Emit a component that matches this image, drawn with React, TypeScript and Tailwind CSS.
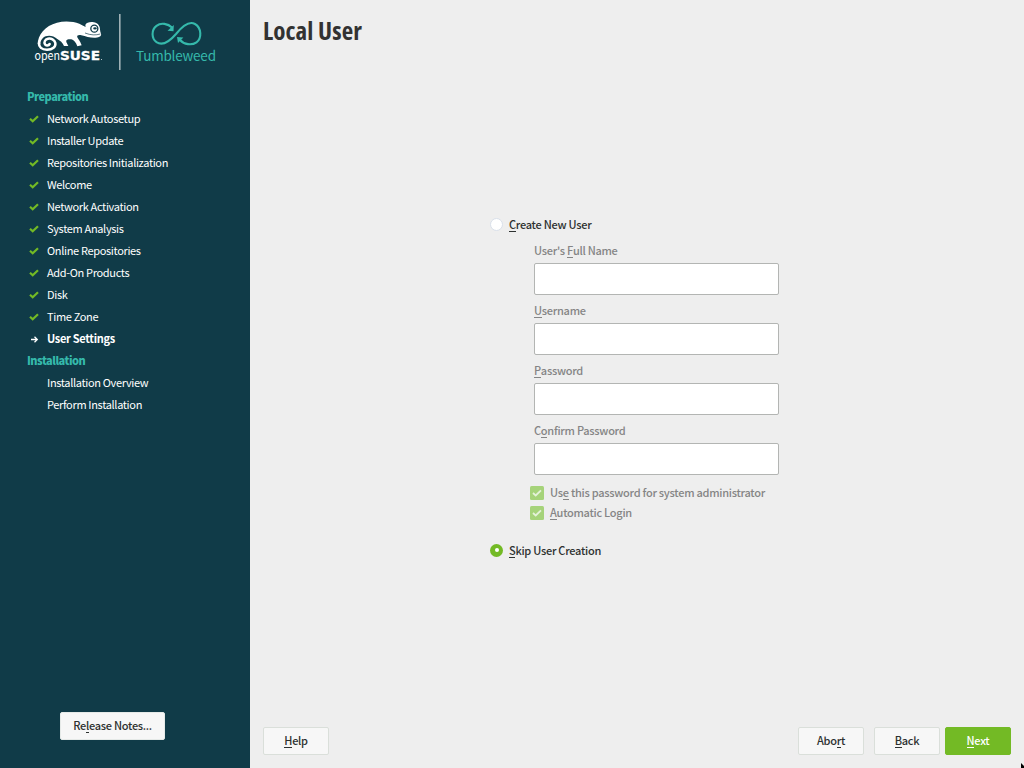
import React from "react";

const FONT = "font-['Noto_Sans_CJK_SC','Noto_Sans',sans-serif]";

/** Label with an underlined keyboard mnemonic, marked by "&" before the letter. */
function Label({ text }: { text: string }) {
  const i = text.indexOf("&");
  if (i < 0) return <>{text}</>;
  return (
    <>
      {text.slice(0, i)}
      <span className="inline-block h-4 border-b border-current align-top leading-4">{text[i + 1]}</span>
      {text.slice(i + 2)}
    </>
  );
}

function Logo() {
  return (
    <svg width="250" height="80" viewBox="0 0 250 80" className="block shrink-0">
      <g transform="translate(25 5) scale(.33333)">
        <path
          fill="#fff"
          d="M38 118C38 90 60 62 96 53C118 47 145 49 163 56C170 59 176 63 182 66C180 60 181 55 188 53C199 49 218 51 223 64C226 70 224 77 228 86C230 92 224 97 212 98C198 99 183 95 169 91C160 89 155 92 157 97C160 103 165 107 170 121L157 124C153 112 146 105 139 103C128 101 121 104 125 113L130 123H117C113 113 105 107 98 103C86 92 72 90 62 94C52 98 46 108 46 118Z"
        />
        <path
          d="M42 114C41 126 50 134 66 134C83 134 93 125 91 114C89 104 78 99 69 101C60 103 56 112 60 118C63 123 71 122 74 117"
          fill="none"
          stroke="#fff"
          strokeWidth="7.5"
          strokeLinecap="round"
        />
        <circle cx="208" cy="71" r="10.5" fill="#fff" stroke="#103b48" strokeWidth="4" />
        <ellipse cx="210" cy="70" rx="5.5" ry="3.6" fill="#103b48" />
        <path d="M180 84C197 91 213 91 226 87" fill="none" stroke="#103b48" strokeWidth="2" />
      </g>
      <g fill="#fff">
        <text x="34.5" y="60.4" fontSize="12" fontFamily="'Noto Sans CJK SC', sans-serif" fontWeight="400" textLength="25.5" lengthAdjust="spacingAndGlyphs">open</text>
        <text x="60" y="60.4" fontSize="13" fontFamily="'DejaVu Sans', sans-serif" fontWeight="700" stroke="#fff" strokeWidth=".3" textLength="40" lengthAdjust="spacingAndGlyphs">SUSE</text>
      </g>
      <rect x="101" y="59" width="1" height="1" fill="#b7c4c8" />
      <rect x="119" y="14" width="1.6" height="56" fill="#9fb1b6" />
      <path
        fill="none"
        stroke="#35b9ab"
        strokeWidth="2.1"
        d="M172 27.6C168 23.6 161 22.3 156.5 25.8C151 30 151.5 38.5 156.5 42.2C163 46.5 170 41 176 34C182 26.5 188.5 20.3 195 24C201.8 28 201.8 38.5 196.5 42.3C191.5 45.8 184 44.5 180 40"
      />
      <path fill="#35b9ab" d="M173.8 25L173.5 31.3L167.5 30.7ZM177 37L183.4 37.5L178 43Z" />
      <text x="136" y="61.4" fill="#35b9ab" fontSize="13.5" fontWeight="400" fontFamily="'Noto Sans CJK SC', sans-serif" textLength="80">Tumbleweed</text>
    </svg>
  );
}

function Step({ label, state }: { label: string; state?: "done" | "current" }) {
  return (
    <li className="flex h-[22px] items-center text-white">
      <span className="flex w-[20px] shrink-0 pl-[2px]">
        {state === "done" && (
          <svg width="10" height="8" viewBox="0 0 10 8">
            <path d="M1 3.8L3.7 6.3L9 1.3" fill="none" stroke="#73ba25" strokeWidth="2.2" />
          </svg>
        )}
        {state === "current" && (
          <svg width="10" height="8" viewBox="0 0 10 8">
            <path d="M2 4.5H8.2M5.5 1.7L8.3 4.5L5.5 7.3" fill="none" stroke="#fff" strokeWidth="1.3" />
          </svg>
        )}
      </span>
      <span className={`mb-[2px] ${state === "current" ? "font-bold tracking-[-0.3px]" : "tracking-[-0.34px]"}`}>{label}</span>
    </li>
  );
}

function Heading({ label }: { label: string }) {
  return (
    <li className="flex h-[22px] items-center pb-[2px] font-black tracking-[-0.5px] text-[#35b9ab]">{label}</li>
  );
}

const DONE = [
  "Network Autosetup",
  "Installer Update",
  "Repositories Initialization",
  "Welcome",
  "Network Activation",
  "System Analysis",
  "Online Repositories",
  "Add-On Products",
  "Disk",
  "Time Zone",
];

function Button({ label, className = "" }: { label: string; className?: string }) {
  return (
    <button className={`flex h-7 items-center justify-center rounded-[2px] border pb-[2px] font-medium tracking-[-0.27px] ${className}`}>
      <span className="h-4 leading-4"><Label text={label} /></span>
    </button>
  );
}

function Field({ label }: { label: string }) {
  return (
    <label className="flex h-[60px] flex-col text-[#858585]">
      <span className="h-[21px] shrink-0 leading-4"><Label text={label} /></span>
      <input disabled className="h-8 w-[245px] rounded-[2px] border border-[#b3b5b3] bg-white" />
    </label>
  );
}

function Check({ label }: { label: string }) {
  return (
    <div className="flex h-5 items-center text-[#858585]">
      <span className="mr-[6px] flex size-[14px] items-center justify-center rounded-[1.5px] bg-[#a6d37a]">
        <svg width="10" height="8" viewBox="0 0 10 8">
          <path d="M1 4L3.7 6.5L9 1.3" fill="none" stroke="#e4f2d8" strokeWidth="1.8" />
        </svg>
      </span>
      <span className="mb-[2px] h-4 leading-4"><Label text={label} /></span>
    </div>
  );
}

function Radio({ label, checked }: { label: string; checked?: boolean }) {
  return (
    <div className="flex h-4 items-center text-[#2d3130]">
      <span
        className={`mr-[6px] flex size-[13px] items-center justify-center rounded-full ${
          checked ? "bg-[#73ba25]" : "border border-[#d9e0ea] bg-white"
        }`}
      >
        {checked && <span className="size-1 rounded-full bg-white" />}
      </span>
      <span className="h-4 leading-4"><Label text={label} /></span>
    </div>
  );
}

export default function App() {
  return (
    <div className={`relative flex h-[768px] w-[1024px] overflow-hidden bg-[#eeeeee] text-[11px] leading-4 ${FONT}`}>
      <aside className="flex w-[250px] shrink-0 flex-col bg-[#103b48]">
        <Logo />
        <ul className="flex flex-col pl-[27px] pt-[6px]">
          <Heading label="Preparation" />
          {DONE.map((s) => (
            <Step key={s} label={s} state="done" />
          ))}
          <Step label="User Settings" state="current" />
          <Heading label="Installation" />
          <Step label="Installation Overview" />
          <Step label="Perform Installation" />
        </ul>
        <Button label="Re&lease Notes..." className="mb-7 ml-[60px] mt-auto w-[105px] border-[#e6eae8] bg-[#f7f7f7] text-[#2d3130]" />
      </aside>
      <main className="flex flex-1 flex-col px-[13px] pb-[13px]">
        <h1 className="h-[60px] pt-3 font-['Open_Sans',sans-serif] text-[25px] font-bold leading-9 tracking-[0.1px] text-[#323232] [font-stretch:75%]">
          Local User
        </h1>
        <form className="ml-[227px] mt-[156px] flex flex-col font-medium tracking-[-0.27px]">
          <Radio label="&Create New User" />
          <div className="ml-[44px] mt-[10px] flex flex-col">
            <Field label="User's &Full Name" />
            <Field label="&Username" />
            <Field label="&Password" />
            <Field label="C&onfirm Password" />
          </div>
          <div className="ml-10 mt-px flex flex-col">
            <Check label="Us&e this password for system administrator" />
            <Check label="&Automatic Login" />
          </div>
          <div className="mt-[19px]">
            <Radio label="&Skip User Creation" checked />
          </div>
        </form>
        <footer className="mt-auto flex">
          <Button label="&Help" className="w-[66px] border-[#dadfda] bg-[#f7f7f7] text-[#2d3130]" />
          <Button label="Abo&rt" className="ml-auto w-[66px] border-[#dadfda] bg-[#f7f7f7] text-[#2d3130]" />
          <Button label="&Back" className="ml-[10px] w-[66px] border-[#dadfda] bg-[#f7f7f7] text-[#2d3130]" />
          <Button label="&Next" className="ml-[5px] w-[66px] border-[#73ba25] bg-[#73ba25] text-white" />
        </footer>
      </main>
      <svg className="absolute bottom-0 right-0" width="4" height="5" viewBox="0 0 4 5">
        <path d="M1 0L4 3V5H1Z" fill="#000" />
      </svg>
    </div>
  );
}
